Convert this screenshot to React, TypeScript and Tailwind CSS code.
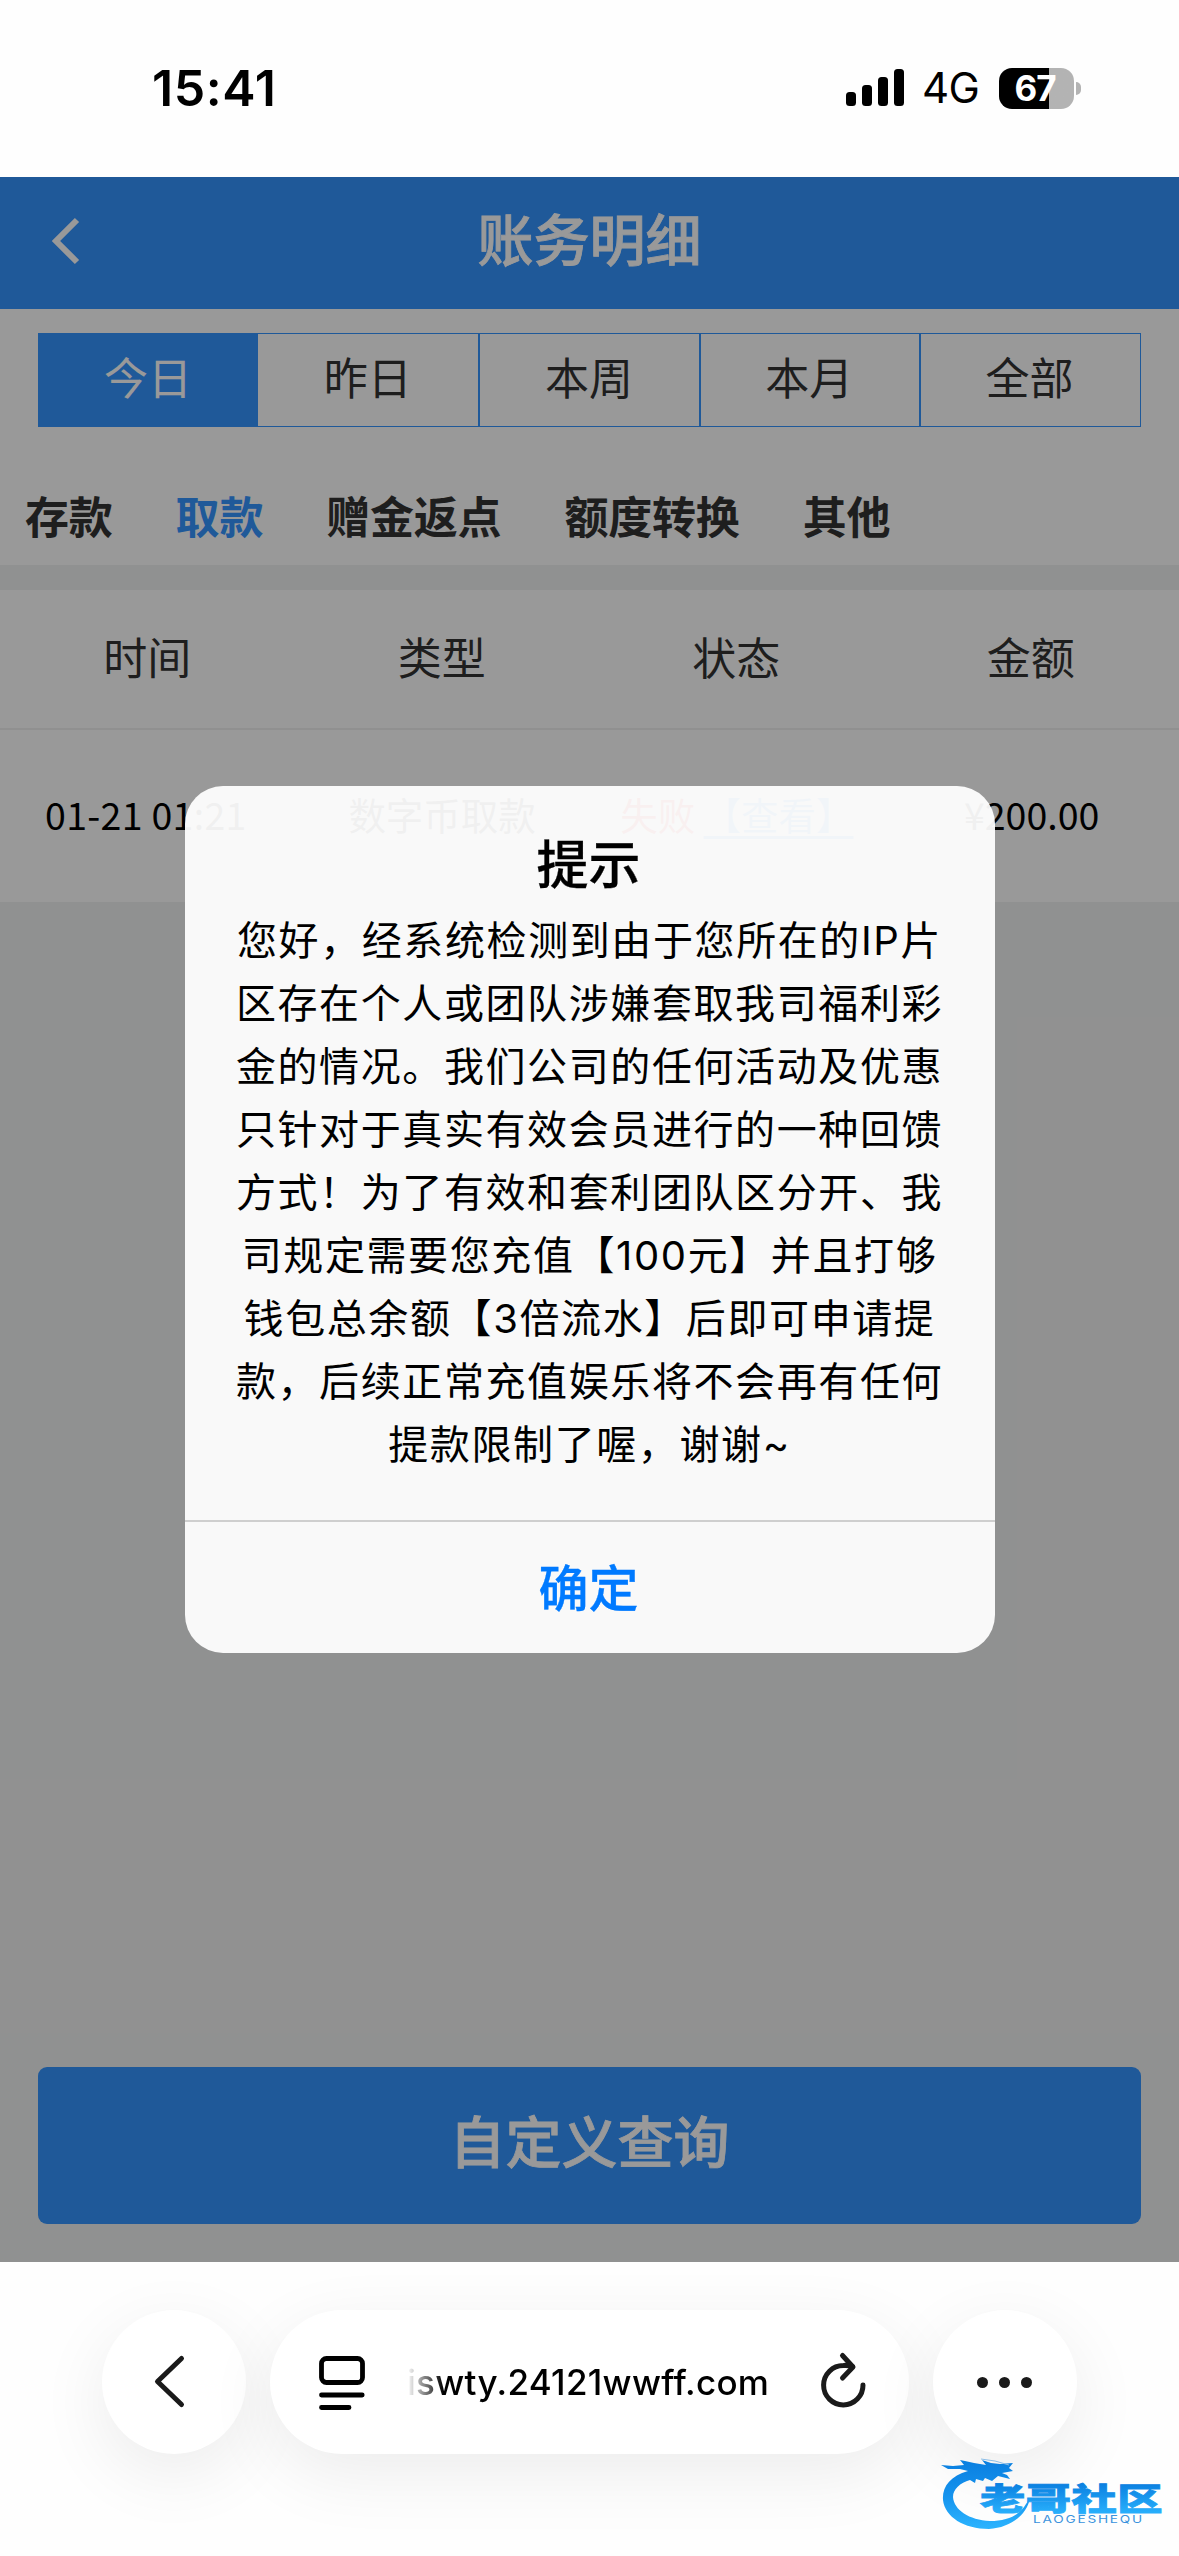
import React, { useState } from 'react';

const ranges = ['今日', '昨日', '本周', '本月', '全部'];
const categories = ['存款', '取款', '赠金返点', '额度转换', '其他'];
const columns = ['时间', '类型', '状态', '金额'];

const notice = [
    '您好，经系统检测到由于您所在的IP片',
    '区存在个人或团队涉嫌套取我司福利彩',
    '金的情况。我们公司的任何活动及优惠',
    '只针对于真实有效会员进行的一种回馈',
    '方式！为了有效和套利团队区分开、我',
    '司规定需要您充值【100元】并且打够',
    '钱包总余额【3倍流水】后即可申请提',
    '款，后续正常充值娱乐将不会再有任何',
    '提款限制了喔，谢谢~',
];

const StatusBar: React.FC = () => (
    <div className="h-[177px] flex items-start justify-between pl-[152px] pr-[98px] text-black">
        <div className="mt-[58px] text-[50px] leading-[60px] font-semibold tracking-[0.6px]">15:41</div>
        <div className="mt-[67px] h-[42px] flex items-center">
            <svg width="58" height="38" viewBox="0 0 58 38">
                <rect x="0" y="23" width="10" height="14" rx="3.5" />
                <rect x="16" y="16" width="10" height="21" rx="3.5" />
                <rect x="32" y="8" width="10" height="29" rx="3.5" />
                <rect x="48" y="0" width="10" height="37" rx="3.5" />
            </svg>
            <span className="ml-[18px] w-[58px] text-[42px] leading-[42px] tracking-[-0.6px]">4G</span>
            <div className="ml-[19px] w-[75px] h-[41px] rounded-[13px] flex items-center justify-center bg-linear-to-r from-black from-[67%] to-[#b3b3b3] to-[67%] text-white text-[35px] leading-[41px] font-bold tracking-[-1px] pr-[3px]">
                67
            </div>
            <div className="ml-[2px] w-[5px] h-[13px] rounded-r-full bg-[#b3b3b3]" />
        </div>
    </div>
);

const Dialog: React.FC<{ onClose: () => void }> = ({ onClose }) => (
    <div className="absolute inset-0 flex items-center justify-center bg-black/40">
        <div className="w-[810px] h-[867px] rounded-[38px] overflow-hidden bg-white/94 text-black text-center flex flex-col">
            <h2 className="mt-[48px] pr-[2px] text-[52px] leading-[63px] font-medium [-webkit-text-stroke:0.3px]">提示</h2>
            <div className="mt-[12px] text-[40px] leading-[63px] tracking-[1.6px] whitespace-nowrap">
                {notice.map((line) => (
                    <p key={line}>{line}</p>
                ))}
            </div>
            <button
                onClick={onClose}
                className="mt-auto h-[133px] border-t-2 border-[#cfcfcf] pt-[3px] pr-[2px] text-[50px] font-medium text-[#007aff] [-webkit-text-stroke:0.3px]"
            >
                确定
            </button>
        </div>
    </div>
);

const Watermark: React.FC = () => (
    <svg className="absolute left-[930px] top-[2450px]" width="249" height="90" viewBox="0 0 249 90">
        <defs>
            <linearGradient id="wave" x1="0" y1="10" x2="0" y2="80" gradientUnits="userSpaceOnUse">
                <stop offset="0" stopColor="#0a7fe0" />
                <stop offset="0.5" stopColor="#1593ee" />
                <stop offset="1" stopColor="#2cb5ff" />
            </linearGradient>
            <linearGradient id="word" x1="0" y1="33" x2="0" y2="62" gradientUnits="userSpaceOnUse">
                <stop offset="0" stopColor="#0a7fe0" />
                <stop offset="1" stopColor="#27aefb" />
            </linearGradient>
        </defs>
        <path
            fill="url(#wave)"
            d="M38 21 C20 26 12 37 13 50 C15 67 34 79 59 79 C80 78 97 65 100 48 L96 54 C90 65 77 71 60 71 C39 70 24 60 23 47 C23 39 30 33 40 30 L45 33 L46 29 L53 31 L55 28 L62 31 L68 26 L80 29 L77 25 L72 23 L83 21 L79 18 L83 13 L70 14 L61 13 L52 10 L56 15 L44 13 L35 11 L30 10 L34 15 L23 16 L11 15 L18 19 L30 19 Z"
        />
        <path d="M51 9 Q65 10 79 15" stroke="#8dbfe8" strokeWidth="1" fill="none" />
        <g fill="url(#word)" fontSize="31" fontWeight="900" transform="translate(50 0) scale(1.46 1)">
            <text x="0" y="60" textLength="125" className="font-['Noto_Sans_CJK_SC',sans-serif]" stroke="url(#word)" strokeWidth="0.8">老哥社区</text>
        </g>
        <g fill="#3a93dd" fontSize="10.5" transform="translate(103 0) scale(1.3 1)">
            <text x="0" y="73" textLength="84" className="font-['Inter',sans-serif]">LAOGESHEQU</text>
        </g>
    </svg>
);

const BrowserBar: React.FC = () => (
    <div className="flex-1 overflow-hidden bg-[#fefefe] pt-[48px] flex items-start justify-center gap-6">
        <div className="w-36 h-36 rounded-full bg-white shadow-[0_20px_70px_rgba(0,0,0,0.075)] flex items-center justify-center pr-[5px]">
            <svg width="40" height="60" viewBox="0 0 40 60" fill="none" stroke="#1a1a1a" strokeWidth="5" strokeLinecap="round" strokeLinejoin="round">
                <path d="M29.5 6.5 L5.5 29.5 L29.5 52.5" />
            </svg>
        </div>
        <div className="w-[639px] h-36 rounded-full bg-white shadow-[0_20px_70px_rgba(0,0,0,0.075)] flex items-center pl-[49px] pr-[39px]">
            <svg width="46" height="56" viewBox="0 0 46 56" fill="none" stroke="#000" strokeWidth="4.8" strokeLinecap="round">
                <rect x="2.5" y="4.5" width="41" height="24" rx="5" />
                <path d="M2.5 41 H43.2 M2.5 53.5 H30" />
            </svg>
            <div className="ml-[42px] w-[366px] text-[35px] leading-[48px] tracking-[0.3px] font-medium text-black whitespace-nowrap mask-l-from-90% mask-l-to-100%">
                iswty.24121wwff.com
            </div>
            <svg className="ml-auto mb-[2px]" width="50" height="60" viewBox="0 0 50 60" fill="none" stroke="#1a1a1a" strokeWidth="5" strokeLinecap="round" strokeLinejoin="round">
                <path d="M43 34 A19.7 19.7 0 1 1 23.5 14.5 Q28 14 32.5 15.5" />
                <path d="M22.5 4.5 L33 16 L22.5 27" />
            </svg>
        </div>
        <div className="w-36 h-36 rounded-full bg-white shadow-[0_20px_70px_rgba(0,0,0,0.075)] flex items-center justify-center gap-[11px] pr-[2px]">
            <span className="w-[11px] h-[11px] rounded-full bg-[#1a1a1a]" />
            <span className="w-[11px] h-[11px] rounded-full bg-[#1a1a1a]" />
            <span className="w-[11px] h-[11px] rounded-full bg-[#1a1a1a]" />
        </div>
    </div>
);

export default function App() {
    const [open, setOpen] = useState(true);
    const [range, setRange] = useState('今日');
    const [category, setCategory] = useState('取款');

    return (
        <div className="relative w-[1179px] h-[2556px] overflow-hidden flex flex-col bg-[#fefefe] font-['Inter','Noto_Sans_CJK_SC',sans-serif]">
            <StatusBar />

            <main className="relative h-[2085px] flex flex-col bg-[#f1f2f2] text-[#333]">
                <header className="h-[132px] pb-[4px] grid grid-cols-[1fr_auto_1fr] items-center bg-[#3494ff] text-white">
                    <svg className="ml-[50px]" width="32" height="48" viewBox="0 0 32 48" fill="none" stroke="#fff" strokeWidth="6">
                        <path d="M27 3 L6 24 L27 45" />
                    </svg>
                    <h1 className="text-[56px] leading-[80px] font-medium [-webkit-text-stroke:0.8px]">账务明细</h1>
                </header>

                <section className="h-[256px] bg-white pt-6">
                    <div className="mx-[38px] h-[94px] grid grid-cols-5 border border-b-[1.5px] border-[#3494ff]">
                        {ranges.map((item) => (
                            <button
                                key={item}
                                onClick={() => setRange(item)}
                                className={`-ml-px first:ml-0 pb-[3px] pr-[2px] border-l-2 first:border-l-0 nth-2:border-l-0 border-[#3494ff] text-[44px] leading-none ${item === range ? 'bg-[#3494ff] text-white' : 'bg-white'}`}
                            >
                                {item}
                            </button>
                        ))}
                    </div>
                    <nav className="mt-[58px] pl-[25px] flex gap-[63px] text-[44px] leading-[66px] font-bold tracking-[-0.2px]">
                        {categories.map((item) => (
                            <button
                                key={item}
                                onClick={() => setCategory(item)}
                                className={item === category ? 'text-[#3494ff]' : ''}
                            >
                                {item}
                            </button>
                        ))}
                    </nav>
                </section>

                <section className="mt-[25px] bg-white text-center">
                    <div className="h-[140px] pr-[1px] grid grid-cols-4 items-center border-b-2 border-[#f0f1f1] text-[44px]">
                        {columns.map((item) => (
                            <span key={item}>{item}</span>
                        ))}
                    </div>
                    <div className="h-[172px] pb-[4px] grid grid-cols-4 items-center font-['Noto_Sans_CJK_SC',sans-serif] text-[37.5px] text-black whitespace-nowrap">
                        <span className="pr-[3px] tracking-[0.3px]">01-21 01:21</span>
                        <span>数字币取款</span>
                        <span className="text-[#ff0000]">
                            失败 <u className="text-[#3494ff] decoration-[3px] underline-offset-[6px]">【查看】</u>
                        </span>
                        <span>¥200.00</span>
                    </div>
                </section>

                <button className="mt-auto mb-[38px] mx-[38px] h-[157px] pb-[5px] rounded-[9px] bg-[#3494ff] text-white text-[56px] font-medium [-webkit-text-stroke:0.8px]">
                    自定义查询
                </button>

                {open && <Dialog onClose={() => setOpen(false)} />}
            </main>

            <BrowserBar />
            <Watermark />
        </div>
    );
}
